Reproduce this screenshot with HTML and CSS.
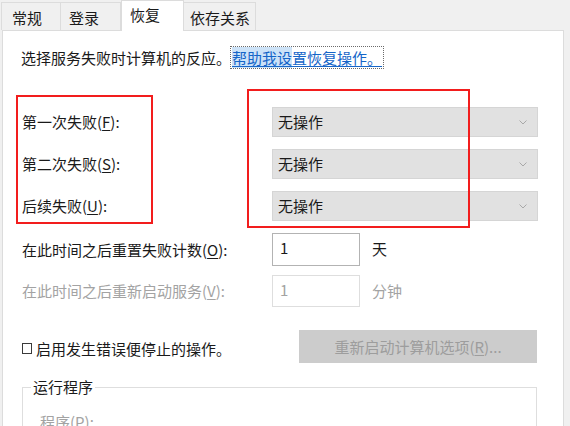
FILE: index.html
```html
<!DOCTYPE html>
<html lang="zh-CN">
<head>
<meta charset="utf-8">
<title>恢复</title>
<link rel="stylesheet" href="styles.css">
</head>
<body>
<div class="tabs">
  <div class="tab t1">常规</div>
  <div class="tab t2">登录</div>
  <div class="tab active">恢复</div>
  <div class="tab t4">依存关系</div>
</div>
<div class="panel">
  <p class="intro">选择服务失败时计算机的反应。<a class="help"><span class="sel">帮助我设</span>置恢复操作。</a></p>

  <div class="grid actions">
    <div class="lbl">第一次失败(<u>F</u>):</div>
    <div class="select"><span>无操作</span><svg class="chev" width="8" height="5" viewBox="0 0 8 5"><polyline points="0.5,0.5 4,4 7.5,0.5" fill="none" stroke="#a8a8a8" stroke-width="1"/></svg></div>
    <div class="lbl">第二次失败(<u>S</u>):</div>
    <div class="select"><span>无操作</span><svg class="chev" width="8" height="5" viewBox="0 0 8 5"><polyline points="0.5,0.5 4,4 7.5,0.5" fill="none" stroke="#a8a8a8" stroke-width="1"/></svg></div>
    <div class="lbl">后续失败(<u>U</u>):</div>
    <div class="select"><span>无操作</span><svg class="chev" width="8" height="5" viewBox="0 0 8 5"><polyline points="0.5,0.5 4,4 7.5,0.5" fill="none" stroke="#a8a8a8" stroke-width="1"/></svg></div>
  </div>

  <div class="grid counters">
    <div class="lbl">在此时间之后重置失败计数(<u>O</u>):</div>
    <div class="field"><div class="input">1</div><span class="unit">天</span></div>
    <div class="lbl dis">在此时间之后重新启动服务(<u>V</u>):</div>
    <div class="field"><div class="input input-dis">1</div><span class="unit dis">分钟</span></div>
  </div>

  <div class="check-row">
    <div class="check"><span class="box"></span>启用发生错误便停止的操作。</div>
    <div class="btn">重新启动计算机选项(<u>R</u>)...</div>
  </div>

  <fieldset class="group">
    <legend>运行程序</legend>
    <div class="prog dis">程序(<u>P</u>):</div>
  </fieldset>

  <div class="mark mark-l"></div>
  <div class="mark mark-r"></div>
</div>
</body>
</html>
```

FILE: styles.css
```css
html, body {
  margin: 0;
  padding: 0;
}
body {
  width: 570px;
  height: 426px;
  overflow: hidden;
  background: #f0f0f0;
  font-family: "Noto Sans CJK SC", "Noto Sans", sans-serif;
  font-size: 15px;
  line-height: 20px;
  color: #1a1a1a;
}
u {
  text-decoration: underline;
  text-underline-offset: 2px;
  text-decoration-thickness: 1px;
}

/* tabs */
.tabs {
  display: flex;
  align-items: flex-end;
  height: 30px;
  padding-left: 1px;
}
.tab {
  box-sizing: border-box;
  height: 28px;
  padding-top: 5px;
  background: #f0f0f0;
  border: 1px solid #dcdcdc;
  border-bottom: none;
  color: #1a1a1a;
}
.t1 { width: 60px; padding-left: 10px; }
.t2 { width: 60px; padding-left: 8px; border-left: none; }
.t4 { width: 72px; padding-left: 6px; border-left: none; }
.tab.active {
  position: relative;
  z-index: 1;
  width: 63px;
  height: 31px;
  margin-bottom: -1px;
  margin-left: 0;
  padding-left: 8px;
  padding-top: 4px;
  background: #ffffff;
  border-bottom: none;
}

/* panel */
.panel {
  position: relative;
  box-sizing: border-box;
  margin-left: 2px;
  width: 562px;
  height: 396px;
  overflow: hidden;
  background: #ffffff;
  border: 1px solid #dcdcdc;
  border-bottom: none;
  padding: 17px 25px 0 18px;
}
.intro {
  margin: 0;
  height: 20px;
  white-space: nowrap;
}
.help {
  color: #1565c8;
  text-decoration: underline;
  text-underline-offset: 2px;
  outline: 1px dotted #6a6a6a;
  outline-offset: 0;
  padding: 0 1px;
}
.help .sel {
  background: #cde3f8;
}

.grid {
  display: grid;
  grid-template-columns: 251px 266px;
  align-items: center;
}
.actions {
  margin-top: 39px;
  grid-template-rows: 30px 30px 30px;
  row-gap: 12px;
}
.counters {
  margin-top: 12px;
  grid-template-rows: 33px 32px;
  row-gap: 9px;
}
.lbl {
  padding-left: 1px;
  white-space: nowrap;
}
.dis {
  color: #a3a3a3;
}
.select {
  box-sizing: border-box;
  height: 30px;
  display: flex;
  align-items: center;
  justify-content: space-between;
  padding: 0 10px 0 5px;
  background: #e1e1e1;
  border: 1px solid #d5d5d5;
}
.chev {
  display: block;
}
.field {
  display: flex;
  align-items: center;
  gap: 12px;
  height: 100%;
}
.input {
  box-sizing: border-box;
  width: 88px;
  height: 100%;
  padding: 4px 0 0 7px;
  border: 1px solid #b3b3b3;
  background: #ffffff;
}
.input-dis {
  border-color: #dedede;
  color: #a3a3a3;
}
.unit {
  padding-bottom: 1px;
}

.check-row {
  margin-top: 23px;
  display: flex;
  align-items: center;
  justify-content: space-between;
  height: 33px;
}
.check {
  display: flex;
  align-items: center;
  padding-top: 4px;
  white-space: nowrap;
}
.box {
  box-sizing: border-box;
  width: 10px;
  height: 11px;
  border: 1px solid #3a3a3a;
  margin: 0 4px 0 1px;
}
.btn {
  box-sizing: border-box;
  width: 238px;
  height: 33px;
  margin-right: 1px;
  display: flex;
  align-items: center;
  justify-content: center;
  background: #cccccc;
  color: #9d9d9d;
  white-space: nowrap;
}

.group {
  margin: 14px 1px 0 1px;
  padding: 0 0 20px 8px;
  border: 1px solid #dedede;
  min-width: 0;
}
.group legend {
  padding: 0 2px;
  color: #1a1a1a;
}
.prog {
  margin-top: 15px;
  padding-left: 9px;
}

/* red annotation boxes */
.mark {
  position: absolute;
  box-sizing: border-box;
  border: 2px solid #f21d1d;
  pointer-events: none;
}
.mark-l {
  left: 13px;
  top: 64px;
  width: 137px;
  height: 129px;
}
.mark-r {
  left: 244px;
  top: 58px;
  width: 223px;
  height: 139px;
}
```
